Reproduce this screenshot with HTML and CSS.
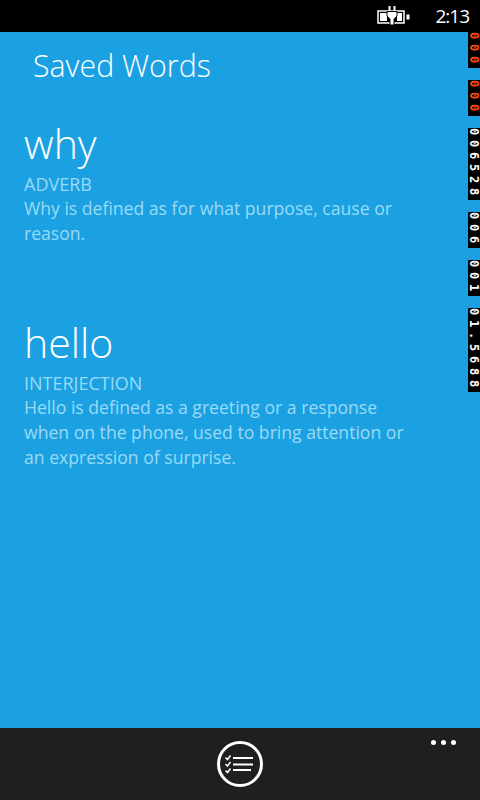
FILE: index.html
```html
<!DOCTYPE html>
<html lang="en">
<head>
    <meta charset="UTF-8">
    <title>Saved Words</title>
    <link rel="stylesheet" href="styles.css">
</head>
<body>
    <div class="status-bar">
        <svg class="battery" width="33" height="20" viewBox="0 0 33 20">
            <rect x="1" y="5" width="26" height="12" fill="none" stroke="#fff" stroke-width="1.500"/>
            <path d="M3 7h7v8H3zM20 7h5v8h-5z" fill="#fff"/>
            <path d="M10 5.500h10v4.500l-3 3v6h-4v-6l-3-3z" fill="#fff" stroke="#000" stroke-width="1"/>
            <path d="M11.500 0h2v5h-2zM16.500 0h2v5h-2z" fill="#fff"/>
            <path d="M29.500 8.500h3v5h-3z" fill="#fff"/>
        </svg>
        <span class="clock">2:13</span>
    </div>

    <div class="page">
        <h1>Saved Words</h1>

        <div class="word">
            <h2>why</h2>
            <h6>ADVERB</h6>
            <p>Why is defined as for what purpose, cause or reason.</p>
        </div>

        <div class="word">
            <h2>hello</h2>
            <h6>INTERJECTION</h6>
            <p>Hello is defined as a greeting or a response when on the phone, used to bring attention or an expression of surprise.</p>
        </div>
    </div>

    <div class="counters">
        <span class="counter red">000</span>
        <span class="counter red">000</span>
        <span class="counter">006528</span>
        <span class="counter">006</span>
        <span class="counter">001</span>
        <span class="counter">01.5688</span>
    </div>

    <div class="app-bar">
        <svg width="50" height="50" viewBox="0 0 50 50">
            <circle cx="25" cy="25" r="21.500" fill="none" stroke="#fff" stroke-width="3"/>
            <path d="M18 19h20M18 25.500h20M18 31h18" stroke="#fff" stroke-width="2" fill="none"/>
            <path d="M10.500 18.500l2 2 3-4M10.500 25l2 2 3-4M10.500 31.500l2 2 3-4" stroke="#fff" stroke-width="1.500" fill="none"/>
        </svg>
        <div class="dots"><i></i><i></i><i></i></div>
    </div>
</body>
</html>
```

FILE: styles.css
```css
* {
    margin: 0;
    padding: 0;
    box-sizing: border-box;
}

body {
    font-family: 'Open Sans', sans-serif;
    background: #1ba1e2;
    color: white;
    width: 480px;
    height: 800px;
    overflow: hidden;
    display: flex;
    flex-direction: column;
    position: relative;
}

.status-bar {
    height: 32px;
    background: black;
    display: flex;
    align-items: center;
    justify-content: flex-end;
    padding-right: 11px;
}

.battery {
    margin-right: 25px;
}

.clock {
    font-size: 19px;
    letter-spacing: -1px;
}

.page {
    flex: 1;
    padding: 0 24px;
}

h1 {
    font-size: 30.300px;
    font-weight: 300;
    line-height: 44px;
    margin: 12px 0 0 9px;
}

.word {
    width: 392px;
    height: 199px;
}

.word:first-of-type {
    margin-top: 26px;
}

h2 {
    font-size: 41px;
    font-weight: 300;
    line-height: 58px;
}

h6, p {
    font-size: 17.600px;
    font-weight: 400;
    line-height: 25px;
    color: #9adaf6;
}

h6 {
    font-size: 18px;
    line-height: 24px;
}

.counters {
    position: absolute;
    top: 32px;
    right: 0;
    width: 12px;
    display: flex;
    flex-direction: column;
    gap: 12px;
}

.counter {
    background: black;
    font-family: 'DejaVu Sans Mono', monospace;
    font-size: 12px;
    font-weight: bold;
    line-height: 12px;
    writing-mode: vertical-rl;
    letter-spacing: 4.780px;
    color: white;
}

.counter.red {
    color: #ff4a10;
}

.app-bar {
    height: 72px;
    background: #1f1f1f;
    display: flex;
    justify-content: center;
    align-items: center;
    position: relative;
}

.dots {
    position: absolute;
    top: 12px;
    right: 24px;
    display: flex;
    gap: 5px;
}

.dots i {
    width: 5px;
    height: 5px;
    background: white;
    border-radius: 50%;
}
```
